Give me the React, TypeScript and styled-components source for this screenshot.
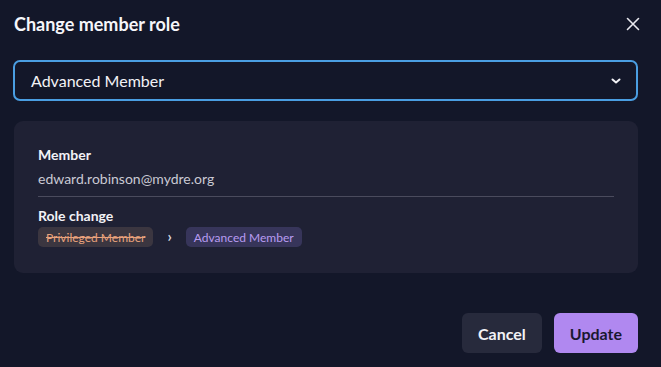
import React from 'react';
import styled, {createGlobalStyle} from "styled-components";

const GlobalStyle = createGlobalStyle`
  html, body {
    margin: 0;
    padding: 0;
    background: #131729;
  }
  body {
    font-family: Lato, "Noto Sans", sans-serif;
    color: #f4f4f8;
  }
`;

const Dialog = styled.div`
  width: 661px;
  height: 367px;
  box-sizing: border-box;
  padding: 10px 23px 14px 14px;
  display: flex;
  flex-direction: column;
  background: #131729;
`;

const Header = styled.div`
  display: flex;
  justify-content: space-between;
  align-items: center;
  height: 28px;
  margin-right: -4px;
`;

const Title = styled.h2`
  margin: 0;
  font-size: 18px;
  font-weight: 700;
  color: #f6f6fa;
`;

const CloseButton = styled.button`
  width: 18px;
  height: 18px;
  padding: 0;
  border: none;
  background: none;
  color: #e8e8ee;
  display: flex;
  align-items: center;
  justify-content: center;
  cursor: pointer;
`;

const Select = styled.div`
  margin: 22px 0 0 -1px;
  height: 41px;
  box-sizing: border-box;
  border: 2px solid #4a9ee2;
  border-radius: 7px;
  display: flex;
  align-items: center;
  justify-content: space-between;
  padding: 0 14px 0 16px;
  font-size: 16px;
  color: #f2f2f6;
`;

const Card = styled.div`
  margin-top: 20px;
  height: 152px;
  box-sizing: border-box;
  background: #1f2134;
  border-radius: 9px;
  padding: 25px 24px 0 24px;
  display: flex;
  flex-direction: column;
`;

const Label = styled.div`
  font-size: 14px;
  font-weight: 700;
  color: #f2f2f6;
  line-height: 17px;
`;

const Value = styled.div`
  margin-top: 7px;
  font-size: 14px;
  color: #c9c9d3;
  line-height: 17px;
`;

const Divider = styled.div`
  height: 1px;
  background: #4a4b5d;
  margin: 9px 0 10px;
`;

const RoleRow = styled.div`
  margin-top: 3px;
  display: flex;
  align-items: center;
  gap: 10px;
`;

const Badge = styled.span<{ $tone: 'old' | 'new' }>`
  height: 20px;
  display: inline-flex;
  align-items: center;
  padding: 0 8px;
  border-radius: 5px;
  font-size: 12px;
  background: ${p => p.$tone === 'old' ? '#3b3640' : '#37355a'};
  color: ${p => p.$tone === 'old' ? '#e9a27c' : '#b99cf2'};
  text-decoration: ${p => p.$tone === 'old' ? 'line-through' : 'none'};
`;

const Arrow = styled.span`
  font-size: 15px;
  font-weight: 700;
  color: #d8d8e0;
  padding: 0 4px 2px;
`;

const Footer = styled.div`
  margin-top: auto;
  display: flex;
  justify-content: flex-end;
  gap: 12px;
`;

const Button = styled.button<{ $primary?: boolean }>`
  height: 40px;
  padding: 0 16px;
  border: none;
  border-radius: 6px;
  font-family: Lato, "Noto Sans", sans-serif;
  font-size: 16px;
  font-weight: 700;
  background: ${p => p.$primary ? '#b088f0' : '#272a3c'};
  color: ${p => p.$primary ? '#1a1830' : '#f2f2f6'};
  cursor: pointer;
`;

const App: React.FC = () => {
  return (
    <>
      <GlobalStyle/>
      <Dialog>
        <Header>
          <Title>Change member role</Title>
          <CloseButton aria-label="Close">
            <svg width="14" height="14" viewBox="0 0 14 14" fill="none" stroke="currentColor" strokeWidth="1.6" strokeLinecap="round">
              <path d="M1.5 1.5 L12.5 12.5 M12.5 1.5 L1.5 12.5"/>
            </svg>
          </CloseButton>
        </Header>
        <Select>
          <span>Advanced Member</span>
          <svg width="12" height="8" viewBox="0 0 12 8" fill="none" stroke="#f2f2f6" strokeWidth="2" strokeLinecap="round" strokeLinejoin="round">
            <path d="M2.5 2.5 L6 5.5 L9.5 2.5"/>
          </svg>
        </Select>
        <Card>
          <Label>Member</Label>
          <Value>edward.robinson@mydre.org</Value>
          <Divider/>
          <Label>Role change</Label>
          <RoleRow>
            <Badge $tone="old">Privileged Member</Badge>
            <Arrow>›</Arrow>
            <Badge $tone="new">Advanced Member</Badge>
          </RoleRow>
        </Card>
        <Footer>
          <Button>Cancel</Button>
          <Button $primary>Update</Button>
        </Footer>
      </Dialog>
    </>
  )
};

export default App;
